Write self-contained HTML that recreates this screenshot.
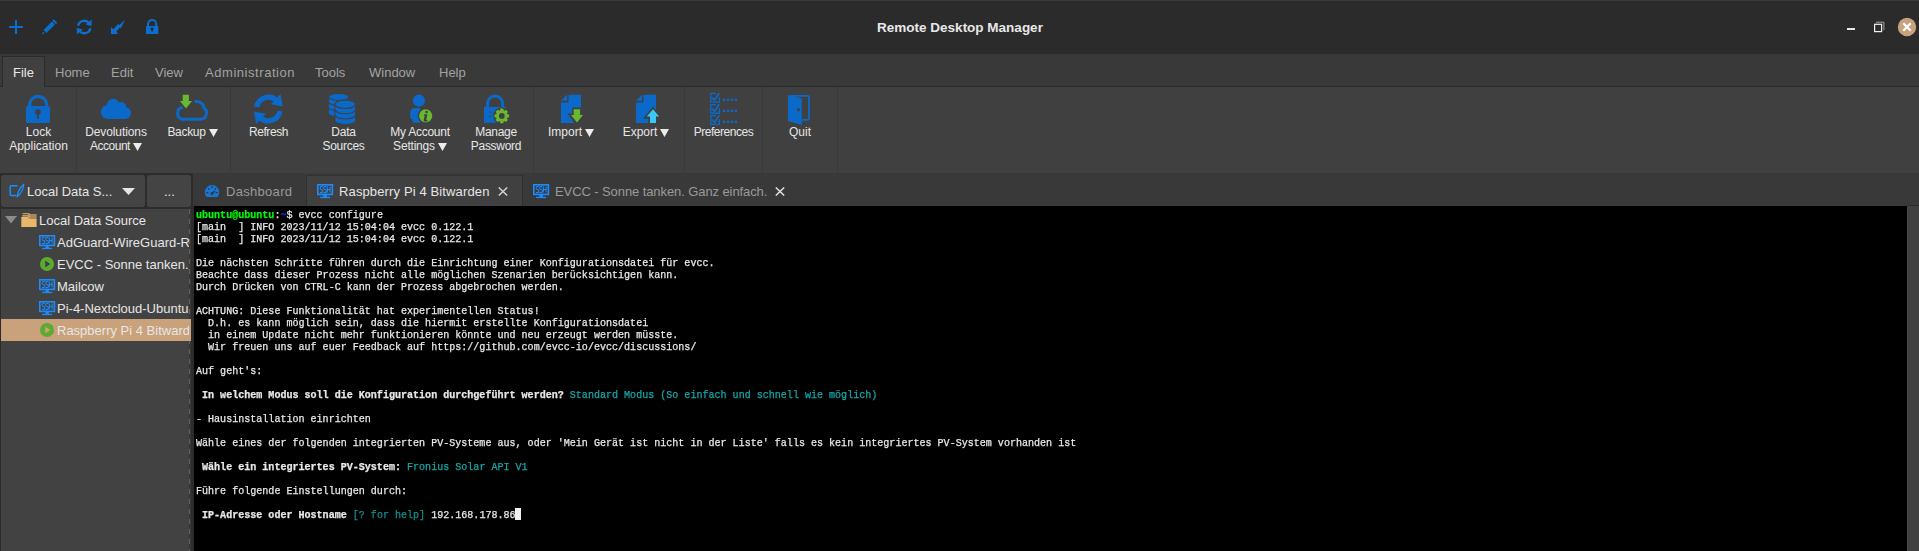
<!DOCTYPE html>
<html><head><meta charset="utf-8"><style>
html,body{margin:0;padding:0;width:1919px;height:551px;overflow:hidden;background:#2b2b2b;}
body>div{position:absolute;box-sizing:border-box;}
body{position:relative;font-family:'Liberation Sans', sans-serif;}
</style></head><body>
<div style="left:0px;top:0px;width:1919px;height:54px;background:#2b2b2b;"></div>
<div style="left:0px;top:0px;width:1919px;height:1px;background:#3a3a3a;"></div>
<svg style="position:absolute;left:0px;top:0px" width="170" height="54" viewBox="0 0 170 54">
<path d="M16 20V34M9 27H23" stroke="#0b6fcf" stroke-width="2"/>
<path d="M44.97 31.53 L53.45 23.05" stroke="#0b6fcf" stroke-width="4.2" stroke-linecap="butt"/>
<circle cx="43.3" cy="33.2" r="1" fill="#0b6fcf"/>
<path d="M53.6 20.5 L56.0 22.9" stroke="#0b6fcf" stroke-width="2" stroke-linecap="round"/>
<g transform="translate(84.2 27)">
<path d="M-6.2 -1.2 A6.3 6.3 0 0 1 4.6 -4.2" fill="none" stroke="#0b6fcf" stroke-width="2.3"/>
<path d="M7.4 -7.4 L7.4 -0.9 L1.4 -2.6 Z" fill="#0b6fcf"/>
<path d="M6.2 1.2 A6.3 6.3 0 0 1 -4.6 4.2" fill="none" stroke="#0b6fcf" stroke-width="2.3"/>
<path d="M-7.4 7.4 L-7.4 0.9 L-1.4 2.6 Z" fill="#0b6fcf"/>
</g>
<path d="M111 27 L113.3 29.3 L118.3 23.8 L119.2 25.2 L124.8 19.8 L121 28.3 L119.8 27.6 L116.3 31.8 L118 34 L111 34 Z" fill="#0b6fcf"/>
<path d="M148 26.5 V24 A4.1 4.1 0 0 1 156.2 24 V26.5" fill="none" stroke="#0b6fcf" stroke-width="2"/>
<rect x="146" y="26" width="12.3" height="8" fill="#0b6fcf"/>
<circle cx="152.1" cy="28.8" r="1.5" fill="#2b2b2b"/><rect x="151.4" y="29" width="1.4" height="2.7" fill="#2b2b2b"/>
</svg>
<div style="left:660px;width:600px;text-align:center;top:20px;height:15px;line-height:15px;font-size:13.5px;color:#e8e8e8;font-weight:bold;font-family:'Liberation Sans', sans-serif;white-space:pre;">Remote Desktop Manager</div>
<div style="left:1847px;top:28px;width:8px;height:2px;background:#e8e8e8;"></div>
<svg style="position:absolute;left:1870px;top:18px" width="18" height="18" viewBox="0 0 18 18"><rect x="4.6" y="6.3" width="7" height="7.3" fill="none" stroke="#f0f0f0" stroke-width="1.2"/><path d="M6 4.2 H13.9 V12.2" fill="none" stroke="#b0b0b0" stroke-width="0.9"/></svg>
<svg style="position:absolute;left:1897px;top:17px" width="20" height="20" viewBox="0 0 20 20"><circle cx="10" cy="10" r="9.2" fill="#c8a27c"/><path d="M6.3 6.3 L13.7 13.7 M13.7 6.3 L6.3 13.7" stroke="#fff" stroke-width="2.2"/></svg>
<div style="left:0px;top:54px;width:1919px;height:33px;background:#393939;"></div>
<div style="left:0px;top:86px;width:1919px;height:1px;background:#2a2a2a;"></div>
<div style="left:2px;top:56px;width:43px;height:31px;background:#404040;border:1px solid #2a2a2a;border-bottom:none;"></div>
<div style="left:13px;top:65px;height:15px;line-height:15px;font-size:13px;color:#e8e8e8;font-weight:normal;font-family:'Liberation Sans', sans-serif;white-space:pre;">File</div>
<div style="left:55px;top:65px;height:15px;line-height:15px;font-size:13px;color:#a3a3a3;font-weight:normal;font-family:'Liberation Sans', sans-serif;white-space:pre;letter-spacing:0px">Home</div>
<div style="left:111px;top:65px;height:15px;line-height:15px;font-size:13px;color:#a3a3a3;font-weight:normal;font-family:'Liberation Sans', sans-serif;white-space:pre;letter-spacing:0px">Edit</div>
<div style="left:155px;top:65px;height:15px;line-height:15px;font-size:13px;color:#a3a3a3;font-weight:normal;font-family:'Liberation Sans', sans-serif;white-space:pre;letter-spacing:0px">View</div>
<div style="left:205px;top:65px;height:15px;line-height:15px;font-size:13px;color:#a3a3a3;font-weight:normal;font-family:'Liberation Sans', sans-serif;white-space:pre;letter-spacing:0.55px">Administration</div>
<div style="left:315px;top:65px;height:15px;line-height:15px;font-size:13px;color:#a3a3a3;font-weight:normal;font-family:'Liberation Sans', sans-serif;white-space:pre;letter-spacing:0px">Tools</div>
<div style="left:369px;top:65px;height:15px;line-height:15px;font-size:13px;color:#a3a3a3;font-weight:normal;font-family:'Liberation Sans', sans-serif;white-space:pre;letter-spacing:0px">Window</div>
<div style="left:439px;top:65px;height:15px;line-height:15px;font-size:13px;color:#a3a3a3;font-weight:normal;font-family:'Liberation Sans', sans-serif;white-space:pre;letter-spacing:0px">Help</div>
<div style="left:0px;top:87px;width:1919px;height:86px;background:#404040;"></div>
<div style="left:76px;top:87px;width:1px;height:86px;background:#393939;"></div>
<div style="left:230px;top:87px;width:1px;height:86px;background:#393939;"></div>
<div style="left:533px;top:87px;width:1px;height:86px;background:#393939;"></div>
<div style="left:684px;top:87px;width:1px;height:86px;background:#393939;"></div>
<div style="left:762px;top:87px;width:1px;height:86px;background:#393939;"></div>
<div style="left:837px;top:87px;width:1px;height:86px;background:#393939;"></div>
<div style="left:-261.5px;width:600px;text-align:center;top:125px;height:14px;line-height:14px;font-size:12px;color:#e6e6e6;font-weight:normal;font-family:'Liberation Sans', sans-serif;white-space:pre;letter-spacing:0px">Lock</div>
<div style="left:-261.5px;width:600px;text-align:center;top:139px;height:14px;line-height:14px;font-size:12px;color:#e6e6e6;font-weight:normal;font-family:'Liberation Sans', sans-serif;white-space:pre;letter-spacing:0px">Application</div>
<div style="left:-184px;width:600px;text-align:center;top:125px;height:14px;line-height:14px;font-size:12px;color:#e6e6e6;font-weight:normal;font-family:'Liberation Sans', sans-serif;white-space:pre;letter-spacing:-0.1px">Devolutions</div>
<div style="left:-184px;width:600px;text-align:center;top:139px;height:14px;line-height:14px;font-size:12px;color:#e6e6e6;font-weight:normal;font-family:'Liberation Sans', sans-serif;white-space:pre;letter-spacing:-0.5px">Account<svg width="9" height="8" style="margin-left:3px;vertical-align:baseline;position:relative;top:1px" viewBox="0 0 9 8"><path d="M0 0H9L4.5 8Z" fill="#ececec"/></svg></div>
<div style="left:-107.5px;width:600px;text-align:center;top:125px;height:14px;line-height:14px;font-size:12px;color:#e6e6e6;font-weight:normal;font-family:'Liberation Sans', sans-serif;white-space:pre;letter-spacing:-0.3px">Backup<svg width="9" height="8" style="margin-left:3px;vertical-align:baseline;position:relative;top:1px" viewBox="0 0 9 8"><path d="M0 0H9L4.5 8Z" fill="#ececec"/></svg></div>
<div style="left:-31.5px;width:600px;text-align:center;top:125px;height:14px;line-height:14px;font-size:12px;color:#e6e6e6;font-weight:normal;font-family:'Liberation Sans', sans-serif;white-space:pre;letter-spacing:-0.4px">Refresh</div>
<div style="left:43.5px;width:600px;text-align:center;top:125px;height:14px;line-height:14px;font-size:12px;color:#e6e6e6;font-weight:normal;font-family:'Liberation Sans', sans-serif;white-space:pre;letter-spacing:-0.2px">Data</div>
<div style="left:43.5px;width:600px;text-align:center;top:139px;height:14px;line-height:14px;font-size:12px;color:#e6e6e6;font-weight:normal;font-family:'Liberation Sans', sans-serif;white-space:pre;letter-spacing:-0.3px">Sources</div>
<div style="left:120px;width:600px;text-align:center;top:125px;height:14px;line-height:14px;font-size:12px;color:#e6e6e6;font-weight:normal;font-family:'Liberation Sans', sans-serif;white-space:pre;letter-spacing:-0.25px">My Account</div>
<div style="left:120px;width:600px;text-align:center;top:139px;height:14px;line-height:14px;font-size:12px;color:#e6e6e6;font-weight:normal;font-family:'Liberation Sans', sans-serif;white-space:pre;letter-spacing:-0.2px">Settings<svg width="9" height="8" style="margin-left:3px;vertical-align:baseline;position:relative;top:1px" viewBox="0 0 9 8"><path d="M0 0H9L4.5 8Z" fill="#ececec"/></svg></div>
<div style="left:196px;width:600px;text-align:center;top:125px;height:14px;line-height:14px;font-size:12px;color:#e6e6e6;font-weight:normal;font-family:'Liberation Sans', sans-serif;white-space:pre;letter-spacing:-0.3px">Manage</div>
<div style="left:196px;width:600px;text-align:center;top:139px;height:14px;line-height:14px;font-size:12px;color:#e6e6e6;font-weight:normal;font-family:'Liberation Sans', sans-serif;white-space:pre;letter-spacing:-0.3px">Password</div>
<div style="left:271px;width:600px;text-align:center;top:125px;height:14px;line-height:14px;font-size:12px;color:#e6e6e6;font-weight:normal;font-family:'Liberation Sans', sans-serif;white-space:pre;letter-spacing:0px">Import<svg width="9" height="8" style="margin-left:3px;vertical-align:baseline;position:relative;top:1px" viewBox="0 0 9 8"><path d="M0 0H9L4.5 8Z" fill="#ececec"/></svg></div>
<div style="left:346px;width:600px;text-align:center;top:125px;height:14px;line-height:14px;font-size:12px;color:#e6e6e6;font-weight:normal;font-family:'Liberation Sans', sans-serif;white-space:pre;letter-spacing:0px">Export<svg width="9" height="8" style="margin-left:3px;vertical-align:baseline;position:relative;top:1px" viewBox="0 0 9 8"><path d="M0 0H9L4.5 8Z" fill="#ececec"/></svg></div>
<div style="left:423.5px;width:600px;text-align:center;top:125px;height:14px;line-height:14px;font-size:12px;color:#e6e6e6;font-weight:normal;font-family:'Liberation Sans', sans-serif;white-space:pre;letter-spacing:-0.45px">Preferences</div>
<div style="left:500px;width:600px;text-align:center;top:125px;height:14px;line-height:14px;font-size:12px;color:#e6e6e6;font-weight:normal;font-family:'Liberation Sans', sans-serif;white-space:pre;letter-spacing:0px">Quit</div>
<svg style="position:absolute;left:0px;top:87px" width="840" height="40" viewBox="0 0 840 40"><g transform="translate(0 -87)">
<!-- lock application -->
<path d="M29.6 106 V104.85 A8.5 8.5 0 0 1 46.6 104.85 V106" fill="none" stroke="#0a69c9" stroke-width="3.1"/>
<rect x="26" y="106" width="24" height="17" rx="1.5" fill="#0a69c9"/>
<circle cx="37.9" cy="112.1" r="2.8" fill="#404040"/><rect x="36.9" y="112" width="2" height="6.8" fill="#404040"/>
<!-- cloud -->
<g fill="#0a69c9"><circle cx="107.8" cy="112" r="7"/><circle cx="113.2" cy="105" r="6.2"/><circle cx="121.3" cy="107" r="5"/><circle cx="125" cy="113" r="6"/><rect x="107.8" y="108" width="17.2" height="11"/></g>
<!-- backup -->
<path d="M182.5 107.2 A6.2 6.2 0 0 0 182 119.2 H200.5 A6.2 6.2 0 0 0 204 108 A7.2 7.2 0 0 0 194.6 101.8" fill="none" stroke="#0a69c9" stroke-width="3"/>
<path d="M182.7 94.8 H188.9 V101 H192 L186 108.6 L180 101 H182.7 Z" fill="#68b830"/>
<!-- refresh -->
<g transform="translate(268.6 109) scale(1.04) translate(-268.5 -109)">
<path d="M257 107 A11.5 11.5 0 0 1 276.5 101" fill="none" stroke="#0a69c9" stroke-width="5"/><path d="M280 94.5 L282 106.5 L270.5 104.5 Z" fill="#0a69c9"/><path d="M279.5 111 A11.5 11.5 0 0 1 260 117" fill="none" stroke="#0a69c9" stroke-width="5"/><path d="M256.5 123.5 L254.5 111.5 L266 113.5 Z" fill="#0a69c9"/>
</g>
<!-- data sources -->
<g fill="#0a69c9"><ellipse cx="338.75" cy="97.3" rx="9.85" ry="3.4"/><rect x="328.9" y="97.3" width="19.7" height="15.8"/><ellipse cx="338.75" cy="113.1" rx="9.85" ry="3.4"/></g>
<g fill="none" stroke="#404040" stroke-width="1.1"><path d="M328.9 97.1 A9.85 3.4 0 0 0 348.6 97.1"/><path d="M328.9 102.2 A9.85 3.4 0 0 0 348.6 102.2"/><path d="M328.9 107.4 A9.85 3.4 0 0 0 348.6 107.4"/></g>
<path d="M335.4 104.5 A9.85 3.8 0 0 1 355.1 104.5 V120.3 A9.85 3.8 0 0 1 335.4 120.3 Z" fill="#0a69c9" stroke="#404040" stroke-width="2.2"/>
<path d="M335.4 104.5 A9.85 3.8 0 0 1 355.1 104.5 V120.3 A9.85 3.8 0 0 1 335.4 120.3 Z" fill="#0a69c9"/>
<g fill="none" stroke="#404040" stroke-width="1.1"><path d="M335.4 104.7 A9.85 3.8 0 0 0 355.1 104.7"/><path d="M335.4 110 A9.85 3.8 0 0 0 355.1 110"/><path d="M335.4 115.2 A9.85 3.8 0 0 0 355.1 115.2"/></g>
<!-- my account -->
<circle cx="418.9" cy="100.7" r="6.1" fill="#0a69c9"/>
<path d="M420 107.9 H414.5 A4.2 4.2 0 0 0 410.3 112.1 V118.2 L412.3 119.6 L413 122.8 H420 Z" fill="#0a69c9"/>
<circle cx="425.7" cy="115.8" r="7.3" fill="#68b830" stroke="#404040" stroke-width="1.4"/>
<circle cx="426.6" cy="112.1" r="1.25" fill="#404040"/>
<path d="M424 114.2 H427.4 L426.3 119.5 Q426.2 120.3 427.4 119.9 L427.6 121.2 Q425.4 122.1 424 121.3 Q423.5 120.9 423.7 119.8 L424.7 115.5 H423.8 Z" fill="#404040"/>
<!-- manage password -->
<path d="M487.6 107 V103.6 A7.5 7.5 0 0 1 502.6 103.6 V107" fill="none" stroke="#0a69c9" stroke-width="3"/>
<rect x="484" y="106.9" width="22" height="15.9" fill="#0a69c9"/>
<path d="M489.5 111.5 L491.5 113 M489.5 117 L491.5 115.5" stroke="#404040" stroke-width="1"/>
<g transform="translate(501.8 115.9)"><circle r="8.6" fill="#404040"/><circle r="5.8" fill="#68b830"/><g fill="#68b830"><rect x="-1.7" y="-7.3" width="3.4" height="3.2" rx="0.6" transform="rotate(0)"/><rect x="-1.7" y="-7.3" width="3.4" height="3.2" rx="0.6" transform="rotate(45)"/><rect x="-1.7" y="-7.3" width="3.4" height="3.2" rx="0.6" transform="rotate(90)"/><rect x="-1.7" y="-7.3" width="3.4" height="3.2" rx="0.6" transform="rotate(135)"/><rect x="-1.7" y="-7.3" width="3.4" height="3.2" rx="0.6" transform="rotate(180)"/><rect x="-1.7" y="-7.3" width="3.4" height="3.2" rx="0.6" transform="rotate(225)"/><rect x="-1.7" y="-7.3" width="3.4" height="3.2" rx="0.6" transform="rotate(270)"/><rect x="-1.7" y="-7.3" width="3.4" height="3.2" rx="0.6" transform="rotate(315)"/></g><circle r="2.9" fill="#404040"/></g>
<!-- import -->
<path d="M568.5 94.8 H581 V107.6 H572.2 V113.4 H567.4 L574.2 123.1 H561 V102.4 H568.5 Z" fill="#0a69c9"/>
<path d="M561 100.8 L567.1 94.8 V100.8 Z" fill="#0a69c9"/>
<path d="M573.7 109.2 H580.1 V115 H583 L577 122.4 L570.9 115 H573.7 Z" fill="#68b830"/>
<!-- export -->
<path d="M643.5 94.8 H656 V123 H636 V102.4 H643.5 Z" fill="#0a69c9"/>
<path d="M636 100.8 L642.1 94.8 V100.8 Z" fill="#0a69c9"/>
<path d="M653 106.2 L661 117.8 H657.6 V124 H648.3 V118.7 H643.2 Z" fill="#404040"/>
<path d="M653 109.3 L659.2 116.6 H656 V123 H650 V116.6 H646.8 Z" fill="#3cc8f6"/>
<!-- preferences -->
<g stroke="#0a69c9" fill="none" stroke-width="1.3"><path d="M716 93.45 H710.75 V102.15 H719.45 V97.00"/><path d="M716 104.55 H710.75 V113.25 H719.45 V108.10"/><path d="M716 115.65 H710.75 V124.35 H719.45 V119.20"/></g>
<g stroke="#0a69c9" fill="none" stroke-width="1.8" stroke-linecap="round" stroke-linejoin="round"><path d="M712.3 97.80 L714.7 100.30 L718.8 93.70"/><path d="M712.3 108.90 L714.7 111.40 L718.8 104.80"/><path d="M712.3 120.00 L714.7 122.50 L718.8 115.90"/></g>
<g fill="#0a69c9"><rect x="722.95" y="98.64999999999999" width="2.3" height="2.3"/><rect x="726.95" y="98.64999999999999" width="2.3" height="2.3"/><rect x="730.85" y="98.64999999999999" width="2.3" height="2.3"/><rect x="734.75" y="98.64999999999999" width="2.3" height="2.3"/><rect x="722.95" y="109.75" width="2.3" height="2.3"/><rect x="726.95" y="109.75" width="2.3" height="2.3"/><rect x="730.85" y="109.75" width="2.3" height="2.3"/><rect x="734.75" y="109.75" width="2.3" height="2.3"/><rect x="722.95" y="120.64999999999999" width="2.3" height="2.3"/><rect x="726.95" y="120.64999999999999" width="2.3" height="2.3"/><rect x="730.85" y="120.64999999999999" width="2.3" height="2.3"/><rect x="734.75" y="120.64999999999999" width="2.3" height="2.3"/></g>
<!-- quit -->
<path d="M789.5 95.8 H807.6 A1.4 1.4 0 0 1 809 97.2 V118.4 A1.4 1.4 0 0 1 807.6 119.8 H801" fill="none" stroke="#0a69c9" stroke-width="1.8"/>
<path d="M789.4 94.9 L801.8 98.4 V124.9 L788 120.9 V96.3 A1.4 1.4 0 0 1 789.4 94.9 Z" fill="#0a69c9"/>
<ellipse cx="798.5" cy="109.8" rx="1.4" ry="1.7" fill="#404040"/>
</g></svg>
<div style="left:0px;top:173px;width:1919px;height:378px;background:#393939;"></div>
<div style="left:0px;top:173px;width:193px;height:378px;background:#2c2c2c;"></div>
<div style="left:1px;top:175px;width:144px;height:32px;background:#444444;border-radius:3px;"></div>
<div style="left:147px;top:175px;width:44px;height:32px;background:#444444;border-radius:3px;"></div>
<svg style="position:absolute;left:8px;top:182px" width="18" height="17" viewBox="0 0 18 17"><path d="M9.6 3.8 H3.2 A1 1 0 0 0 2.2 4.8 V12.4 A1 1 0 0 0 3.2 13.4 H8.6" fill="none" stroke="#1a8cff" stroke-width="1.5"/><path d="M9.2 14.8 Q10 7.2 15.8 2.2 Q15 9.8 9.2 14.8 Z" fill="none" stroke="#1a8cff" stroke-width="1.3" stroke-linejoin="round"/></svg>
<div style="left:27px;top:184px;height:15px;line-height:15px;font-size:13px;color:#e6e6e6;font-weight:normal;font-family:'Liberation Sans', sans-serif;white-space:pre;">Local Data S...</div>
<svg style="position:absolute;left:122px;top:188px" width="13" height="7" viewBox="0 0 13 7"><path d="M0 0 H13 L6.5 7 Z" fill="#e6e6e6"/></svg>
<div style="left:164px;top:184px;height:15px;line-height:15px;font-size:13px;color:#e6e6e6;font-weight:normal;font-family:'Liberation Sans', sans-serif;white-space:pre;">...</div>
<div style="left:1px;top:209px;width:189px;height:342px;background:#424242;"></div>
<div style="left:189px;top:209px;width:1px;height:342px;background:repeating-linear-gradient(#5e5e5e 0 5px, #343434 5px 10px);"></div>
<div style="left:190px;top:209px;width:1px;height:342px;background:#3a3a3a;"></div>
<div style="left:193px;top:206px;width:1px;height:345px;background:#2c2c2c;"></div>
<svg style="position:absolute;left:5px;top:216px" width="12" height="8" viewBox="0 0 12 8"><path d="M0 0 H12 L6 7.5 Z" fill="#8c8c8c"/></svg>
<svg style="position:absolute;left:21px;top:212px" width="16" height="16" viewBox="0 0 16 16"><rect x="7.4" y="2" width="8.2" height="6" fill="#a8895c"/><path d="M1.6 1.8 H7.4 Q8.4 1.8 8.9 2.9 M1.2 3.9 H7 Q8 3.9 8.5 5" fill="none" stroke="#e8b86a" stroke-width="1.1"/><path d="M0.3 5.1 H7 L8.8 7.1 H15.6 V15 H0.3 Z" fill="#e8b86a"/></svg>
<div style="left:39px;top:213px;height:15px;line-height:15px;font-size:13px;color:#e6e6e6;font-weight:normal;font-family:'Liberation Sans', sans-serif;white-space:pre;">Local Data Source</div>
<div style="left:1px;top:319px;width:190px;height:22px;background:#c9a27c;"></div>
<svg style="position:absolute;left:39px;top:235px" width="17" height="15" viewBox="0 0 17 15"><rect x="0.8" y="0.8" width="14.6" height="9.6" fill="none" stroke="#1a8cff" stroke-width="1.6"/><g fill="none" stroke="#1a8cff" stroke-width="1.05"><path transform="translate(3.1 2.4)" d="M2.8 0.7 Q2.4 0 1.4 0 Q0 0 0 1.5 Q0 2.8 1.4 3.1 Q2.8 3.4 2.8 4.7 Q2.8 6.2 1.4 6.2 Q0.4 6.2 0 5.5"/><path transform="translate(6.7 2.4)" d="M2.8 0.7 Q2.4 0 1.4 0 Q0 0 0 1.5 Q0 2.8 1.4 3.1 Q2.8 3.4 2.8 4.7 Q2.8 6.2 1.4 6.2 Q0.4 6.2 0 5.5"/><path transform="translate(10.3 2.4)" d="M0 0 V6.2 M2.8 0 V6.2 M0 3.1 H2.8"/></g><rect x="6.4" y="11" width="3.4" height="2" fill="#1a8cff"/><rect x="3.1" y="12.8" width="10" height="1.3" fill="#1a8cff"/></svg>
<div style="left:57px;top:234px;width:132px;height:18px;overflow:hidden;line-height:18px;font-size:13px;color:#e6e6e6;font-family:'Liberation Sans', sans-serif;white-space:pre;">AdGuard-WireGuard-Router</div>
<svg style="position:absolute;left:40px;top:257px" width="15" height="15" viewBox="0 0 15 15"><circle cx="7" cy="7" r="7" fill="#5aab2e"/><path d="M5.2 3.6 L10.4 7 L5.2 10.4 Z" fill="#424242"/></svg>
<div style="left:57px;top:256px;width:132px;height:18px;overflow:hidden;line-height:18px;font-size:13px;color:#e6e6e6;font-family:'Liberation Sans', sans-serif;white-space:pre;">EVCC - Sonne tanken. Ganz einfach.</div>
<svg style="position:absolute;left:39px;top:279px" width="17" height="15" viewBox="0 0 17 15"><rect x="0.8" y="0.8" width="14.6" height="9.6" fill="none" stroke="#1a8cff" stroke-width="1.6"/><g fill="none" stroke="#1a8cff" stroke-width="1.05"><path transform="translate(3.1 2.4)" d="M2.8 0.7 Q2.4 0 1.4 0 Q0 0 0 1.5 Q0 2.8 1.4 3.1 Q2.8 3.4 2.8 4.7 Q2.8 6.2 1.4 6.2 Q0.4 6.2 0 5.5"/><path transform="translate(6.7 2.4)" d="M2.8 0.7 Q2.4 0 1.4 0 Q0 0 0 1.5 Q0 2.8 1.4 3.1 Q2.8 3.4 2.8 4.7 Q2.8 6.2 1.4 6.2 Q0.4 6.2 0 5.5"/><path transform="translate(10.3 2.4)" d="M0 0 V6.2 M2.8 0 V6.2 M0 3.1 H2.8"/></g><rect x="6.4" y="11" width="3.4" height="2" fill="#1a8cff"/><rect x="3.1" y="12.8" width="10" height="1.3" fill="#1a8cff"/></svg>
<div style="left:57px;top:278px;width:132px;height:18px;overflow:hidden;line-height:18px;font-size:13px;color:#e6e6e6;font-family:'Liberation Sans', sans-serif;white-space:pre;">Mailcow</div>
<svg style="position:absolute;left:39px;top:301px" width="17" height="15" viewBox="0 0 17 15"><rect x="0.8" y="0.8" width="14.6" height="9.6" fill="none" stroke="#1a8cff" stroke-width="1.6"/><g fill="none" stroke="#1a8cff" stroke-width="1.05"><path transform="translate(3.1 2.4)" d="M2.8 0.7 Q2.4 0 1.4 0 Q0 0 0 1.5 Q0 2.8 1.4 3.1 Q2.8 3.4 2.8 4.7 Q2.8 6.2 1.4 6.2 Q0.4 6.2 0 5.5"/><path transform="translate(6.7 2.4)" d="M2.8 0.7 Q2.4 0 1.4 0 Q0 0 0 1.5 Q0 2.8 1.4 3.1 Q2.8 3.4 2.8 4.7 Q2.8 6.2 1.4 6.2 Q0.4 6.2 0 5.5"/><path transform="translate(10.3 2.4)" d="M0 0 V6.2 M2.8 0 V6.2 M0 3.1 H2.8"/></g><rect x="6.4" y="11" width="3.4" height="2" fill="#1a8cff"/><rect x="3.1" y="12.8" width="10" height="1.3" fill="#1a8cff"/></svg>
<div style="left:57px;top:300px;width:132px;height:18px;overflow:hidden;line-height:18px;font-size:13px;color:#e6e6e6;font-family:'Liberation Sans', sans-serif;white-space:pre;">Pi-4-Nextcloud-Ubuntu</div>
<svg style="position:absolute;left:40px;top:323px" width="15" height="15" viewBox="0 0 15 15"><circle cx="7" cy="7" r="7" fill="#5aab2e"/><path d="M5.2 3.6 L10.4 7 L5.2 10.4 Z" fill="#c9a27c"/></svg>
<div style="left:57px;top:322px;width:132px;height:18px;overflow:hidden;line-height:18px;font-size:13px;color:#e6e6e6;font-family:'Liberation Sans', sans-serif;white-space:pre;">Raspberry Pi 4 Bitwarden</div>
<div style="left:306px;top:175px;width:217px;height:31px;background:#404040;border:1px solid #303030;border-bottom:none;"></div>
<svg style="position:absolute;left:204px;top:184px" width="16" height="14" viewBox="0 0 16 14"><path d="M2.63 13 A7.2 7.2 0 1 1 13.37 13 Z" fill="#1577d6"/><g stroke="#393939" stroke-width="1.2" stroke-linecap="round"><path d="M8 2.4 V3.8"/><path d="M4.2 4.4 L5.1 5.3"/><path d="M11.8 4.4 L10.9 5.3"/><path d="M2.6 8.6 H4"/><path d="M13.4 8.6 H12"/><path d="M8 9.6 L10.6 7.2" stroke-width="1.5"/></g><circle cx="8" cy="9.6" r="1.5" fill="#393939"/></svg>
<div style="left:226px;top:184px;height:15px;line-height:15px;font-size:13px;color:#9a9a9a;font-weight:normal;font-family:'Liberation Sans', sans-serif;white-space:pre;letter-spacing:0.3px">Dashboard</div>
<svg style="position:absolute;left:317px;top:184px" width="17" height="15" viewBox="0 0 17 15"><rect x="0.8" y="0.8" width="14.6" height="9.6" fill="none" stroke="#1a8cff" stroke-width="1.6"/><g fill="none" stroke="#1a8cff" stroke-width="1.05"><path transform="translate(3.1 2.4)" d="M2.8 0.7 Q2.4 0 1.4 0 Q0 0 0 1.5 Q0 2.8 1.4 3.1 Q2.8 3.4 2.8 4.7 Q2.8 6.2 1.4 6.2 Q0.4 6.2 0 5.5"/><path transform="translate(6.7 2.4)" d="M2.8 0.7 Q2.4 0 1.4 0 Q0 0 0 1.5 Q0 2.8 1.4 3.1 Q2.8 3.4 2.8 4.7 Q2.8 6.2 1.4 6.2 Q0.4 6.2 0 5.5"/><path transform="translate(10.3 2.4)" d="M0 0 V6.2 M2.8 0 V6.2 M0 3.1 H2.8"/></g><rect x="6.4" y="11" width="3.4" height="2" fill="#1a8cff"/><rect x="3.1" y="12.8" width="10" height="1.3" fill="#1a8cff"/></svg>
<div style="left:339px;top:184px;height:15px;line-height:15px;font-size:13px;color:#e6e6e6;font-weight:normal;font-family:'Liberation Sans', sans-serif;white-space:pre;letter-spacing:0.13px">Raspberry Pi 4 Bitwarden</div>
<svg style="position:absolute;left:498px;top:187px" width="10" height="9" viewBox="0 0 10 9"><path d="M0.8 0.5 L9.2 8.5 M9.2 0.5 L0.8 8.5" stroke="#cfcfcf" stroke-width="1.5"/></svg>
<svg style="position:absolute;left:533px;top:184px" width="17" height="15" viewBox="0 0 17 15"><rect x="0.8" y="0.8" width="14.6" height="9.6" fill="none" stroke="#1a8cff" stroke-width="1.6"/><g fill="none" stroke="#1a8cff" stroke-width="1.05"><path transform="translate(3.1 2.4)" d="M2.8 0.7 Q2.4 0 1.4 0 Q0 0 0 1.5 Q0 2.8 1.4 3.1 Q2.8 3.4 2.8 4.7 Q2.8 6.2 1.4 6.2 Q0.4 6.2 0 5.5"/><path transform="translate(6.7 2.4)" d="M2.8 0.7 Q2.4 0 1.4 0 Q0 0 0 1.5 Q0 2.8 1.4 3.1 Q2.8 3.4 2.8 4.7 Q2.8 6.2 1.4 6.2 Q0.4 6.2 0 5.5"/><path transform="translate(10.3 2.4)" d="M0 0 V6.2 M2.8 0 V6.2 M0 3.1 H2.8"/></g><rect x="6.4" y="11" width="3.4" height="2" fill="#1a8cff"/><rect x="3.1" y="12.8" width="10" height="1.3" fill="#1a8cff"/></svg>
<div style="left:555px;top:184px;height:15px;line-height:15px;font-size:13px;color:#9a9a9a;font-weight:normal;font-family:'Liberation Sans', sans-serif;white-space:pre;letter-spacing:-0.09px">EVCC - Sonne tanken. Ganz einfach.</div>
<svg style="position:absolute;left:775px;top:187px" width="10" height="9" viewBox="0 0 10 9"><path d="M0.8 0.5 L9.2 8.5 M9.2 0.5 L0.8 8.5" stroke="#e0e0e0" stroke-width="1.5"/></svg>
<div style="left:194px;top:206px;width:1713px;height:345px;background:#000000;"></div>
<div style="left:1907px;top:206px;width:12px;height:345px;background:#404040;"></div>
<div style="left:1907px;top:205px;width:12px;height:1px;background:#2c2c2c;"></div>
<div style="left:1907px;top:206px;width:1px;height:345px;background:#474747;"></div>
<div style="left:196px;top:210px;height:11px;line-height:11px;font-size:10.05px;font-family:'Liberation Mono', monospace;white-space:pre;-webkit-text-stroke:0.25px currentColor;will-change:transform;"><span style="color:#08f408;-webkit-text-stroke:0.25px #08f408;font-weight:bold;">ubuntu@ubuntu</span><span style="color:#e8e8e8;-webkit-text-stroke:0.25px #e8e8e8;">:</span><span style="color:#2424ff;-webkit-text-stroke:0.25px #2424ff;font-weight:bold;">~</span><span style="color:#e8e8e8;-webkit-text-stroke:0.25px #e8e8e8;">$ evcc configure</span></div>
<div style="left:196px;top:222px;height:11px;line-height:11px;font-size:10.05px;font-family:'Liberation Mono', monospace;white-space:pre;-webkit-text-stroke:0.25px currentColor;will-change:transform;"><span style="color:#e8e8e8;-webkit-text-stroke:0.25px #e8e8e8;">[main  ] INFO 2023/11/12 15:04:04 evcc 0.122.1</span></div>
<div style="left:196px;top:234px;height:11px;line-height:11px;font-size:10.05px;font-family:'Liberation Mono', monospace;white-space:pre;-webkit-text-stroke:0.25px currentColor;will-change:transform;"><span style="color:#e8e8e8;-webkit-text-stroke:0.25px #e8e8e8;">[main  ] INFO 2023/11/12 15:04:04 evcc 0.122.1</span></div>
<div style="left:196px;top:258px;height:11px;line-height:11px;font-size:10.05px;font-family:'Liberation Mono', monospace;white-space:pre;-webkit-text-stroke:0.25px currentColor;will-change:transform;"><span style="color:#e8e8e8;-webkit-text-stroke:0.25px #e8e8e8;">Die nächsten Schritte führen durch die Einrichtung einer Konfigurationsdatei für evcc.</span></div>
<div style="left:196px;top:270px;height:11px;line-height:11px;font-size:10.05px;font-family:'Liberation Mono', monospace;white-space:pre;-webkit-text-stroke:0.25px currentColor;will-change:transform;"><span style="color:#e8e8e8;-webkit-text-stroke:0.25px #e8e8e8;">Beachte dass dieser Prozess nicht alle möglichen Szenarien berücksichtigen kann.</span></div>
<div style="left:196px;top:282px;height:11px;line-height:11px;font-size:10.05px;font-family:'Liberation Mono', monospace;white-space:pre;-webkit-text-stroke:0.25px currentColor;will-change:transform;"><span style="color:#e8e8e8;-webkit-text-stroke:0.25px #e8e8e8;">Durch Drücken von CTRL-C kann der Prozess abgebrochen werden.</span></div>
<div style="left:196px;top:306px;height:11px;line-height:11px;font-size:10.05px;font-family:'Liberation Mono', monospace;white-space:pre;-webkit-text-stroke:0.25px currentColor;will-change:transform;"><span style="color:#e8e8e8;-webkit-text-stroke:0.25px #e8e8e8;">ACHTUNG: Diese Funktionalität hat experimentellen Status!</span></div>
<div style="left:196px;top:318px;height:11px;line-height:11px;font-size:10.05px;font-family:'Liberation Mono', monospace;white-space:pre;-webkit-text-stroke:0.25px currentColor;will-change:transform;"><span style="color:#e8e8e8;-webkit-text-stroke:0.25px #e8e8e8;">  D.h. es kann möglich sein, dass die hiermit erstellte Konfigurationsdatei</span></div>
<div style="left:196px;top:330px;height:11px;line-height:11px;font-size:10.05px;font-family:'Liberation Mono', monospace;white-space:pre;-webkit-text-stroke:0.25px currentColor;will-change:transform;"><span style="color:#e8e8e8;-webkit-text-stroke:0.25px #e8e8e8;">  in einem Update nicht mehr funktionieren könnte und neu erzeugt werden müsste.</span></div>
<div style="left:196px;top:342px;height:11px;line-height:11px;font-size:10.05px;font-family:'Liberation Mono', monospace;white-space:pre;-webkit-text-stroke:0.25px currentColor;will-change:transform;"><span style="color:#e8e8e8;-webkit-text-stroke:0.25px #e8e8e8;">  Wir freuen uns auf euer Feedback auf https://github.com/evcc-io/evcc/discussions/</span></div>
<div style="left:196px;top:366px;height:11px;line-height:11px;font-size:10.05px;font-family:'Liberation Mono', monospace;white-space:pre;-webkit-text-stroke:0.25px currentColor;will-change:transform;"><span style="color:#e8e8e8;-webkit-text-stroke:0.25px #e8e8e8;">Auf geht&#x27;s:</span></div>
<div style="left:196px;top:390px;height:11px;line-height:11px;font-size:10.05px;font-family:'Liberation Mono', monospace;white-space:pre;-webkit-text-stroke:0.25px currentColor;will-change:transform;"><span style="color:#e8e8e8;-webkit-text-stroke:0.25px #e8e8e8;font-weight:bold;"> In welchem Modus soll die Konfiguration durchgeführt werden?</span><span style="color:#16a6a6;-webkit-text-stroke:0.25px #16a6a6;"> Standard Modus (So einfach und schnell wie möglich)</span></div>
<div style="left:196px;top:414px;height:11px;line-height:11px;font-size:10.05px;font-family:'Liberation Mono', monospace;white-space:pre;-webkit-text-stroke:0.25px currentColor;will-change:transform;"><span style="color:#e8e8e8;-webkit-text-stroke:0.25px #e8e8e8;">- Hausinstallation einrichten</span></div>
<div style="left:196px;top:438px;height:11px;line-height:11px;font-size:10.05px;font-family:'Liberation Mono', monospace;white-space:pre;-webkit-text-stroke:0.25px currentColor;will-change:transform;"><span style="color:#e8e8e8;-webkit-text-stroke:0.25px #e8e8e8;">Wähle eines der folgenden integrierten PV-Systeme aus, oder &#x27;Mein Gerät ist nicht in der Liste&#x27; falls es kein integriertes PV-System vorhanden ist</span></div>
<div style="left:196px;top:462px;height:11px;line-height:11px;font-size:10.05px;font-family:'Liberation Mono', monospace;white-space:pre;-webkit-text-stroke:0.25px currentColor;will-change:transform;"><span style="color:#e8e8e8;-webkit-text-stroke:0.25px #e8e8e8;font-weight:bold;"> Wähle ein integriertes PV-System:</span><span style="color:#16a6a6;-webkit-text-stroke:0.25px #16a6a6;"> Fronius Solar API V1</span></div>
<div style="left:196px;top:486px;height:11px;line-height:11px;font-size:10.05px;font-family:'Liberation Mono', monospace;white-space:pre;-webkit-text-stroke:0.25px currentColor;will-change:transform;"><span style="color:#e8e8e8;-webkit-text-stroke:0.25px #e8e8e8;">Führe folgende Einstellungen durch:</span></div>
<div style="left:196px;top:510px;height:11px;line-height:11px;font-size:10.05px;font-family:'Liberation Mono', monospace;white-space:pre;-webkit-text-stroke:0.25px currentColor;will-change:transform;"><span style="color:#e8e8e8;-webkit-text-stroke:0.25px #e8e8e8;font-weight:bold;"> IP-Adresse oder Hostname</span><span style="color:#0e9090;-webkit-text-stroke:0.25px #0e9090;"> [? for help]</span><span style="color:#e8e8e8;-webkit-text-stroke:0.25px #e8e8e8;"> 192.168.178.86</span></div>
<div style="left:515px;top:508px;width:6px;height:12px;background:#f0f0f0;"></div>
</body></html>
